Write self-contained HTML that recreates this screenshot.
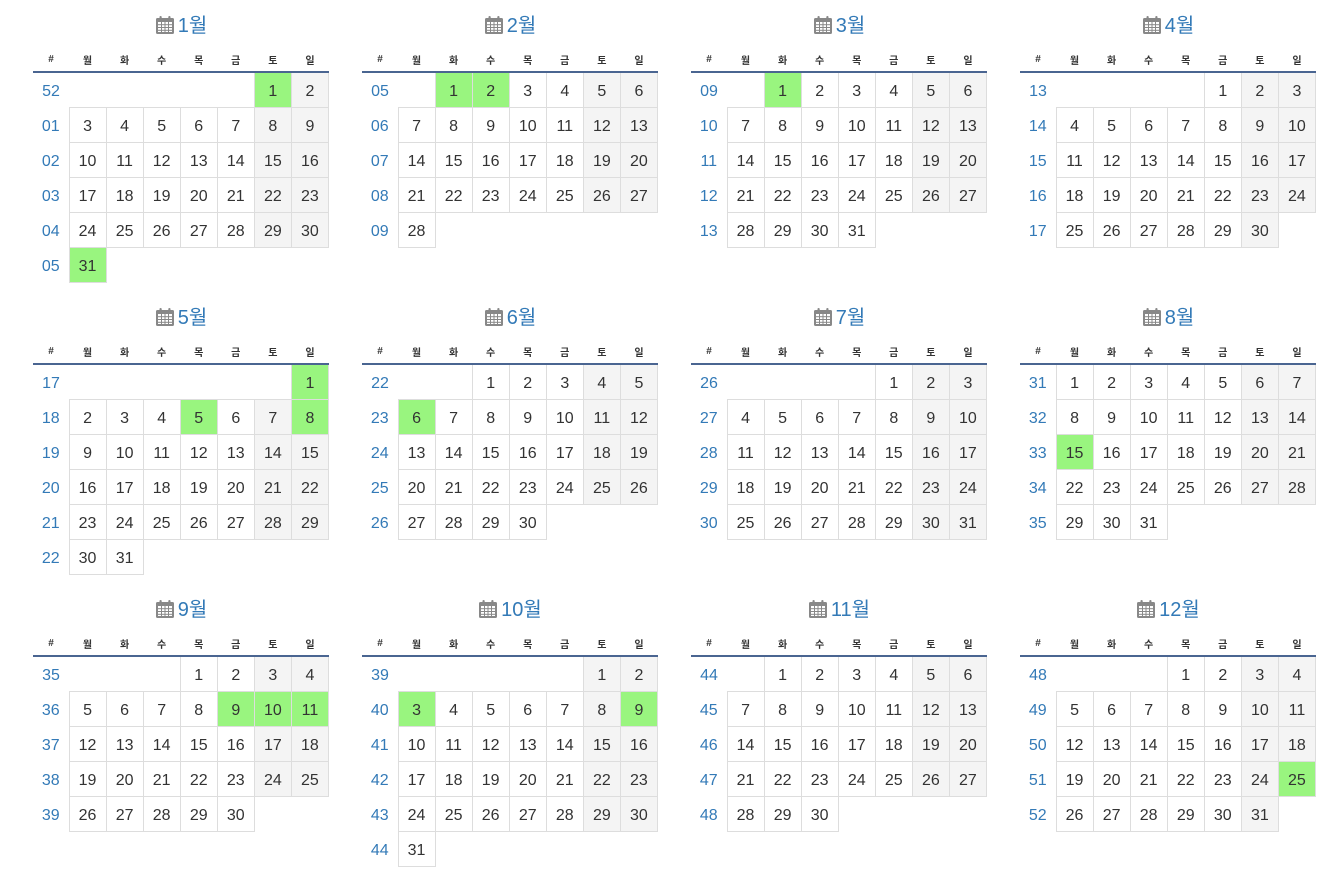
<!DOCTYPE html>
<html><head><meta charset="utf-8"><style>
body{margin:0;background:#fff;font-family:"Liberation Sans","Noto Sans CJK KR",sans-serif;color:#333;width:1341px;height:878px;overflow:hidden;position:relative}
.m{position:absolute;width:296px}
.t{height:47px;line-height:52px;text-align:center;font-size:20px;color:#337ab7}
.t svg{vertical-align:-3px;margin-right:3px}
table{border-collapse:collapse;width:296px;table-layout:fixed}
th{height:24px;font-size:10px;font-weight:bold;color:#333;border-bottom:2px solid #4a6591;padding:0;text-align:center}
th:first-child{width:36px}
td{height:30px;border:1px solid #ddd;text-align:center;font-size:16px;padding:4px 0 0 0}
td:first-child{border:none;color:#337ab7}
td.e{border:none}
td.w{background:#f4f4f4}
td.g{background:#99f57f}
</style></head><body>
<svg width="0" height="0" style="position:absolute"><defs><symbol id="cal" viewBox="0 0 20 20"><rect x="1" y="3" width="18" height="16" rx="1.5" fill="#888"/><rect x="3" y="7" width="14" height="10" fill="#fff"/><g fill="#888"><rect x="3" y="9.2" width="14" height="1"/><rect x="3" y="12" width="14" height="1"/><rect x="3" y="14.8" width="14" height="1"/><rect x="6" y="7" width="1" height="10"/><rect x="9.5" y="7" width="1" height="10"/><rect x="13" y="7" width="1" height="10"/></g><rect x="4.5" y="1" width="2.2" height="4" rx="1" fill="#888"/><rect x="13.3" y="1" width="2.2" height="4" rx="1" fill="#888"/></symbol></defs></svg>

<div class="m" style="left:33px;top:0"><div class="t"><svg width="20" height="20"><use href="#cal"/></svg>1월</div><table><tr><th>#</th><th>월</th><th>화</th><th>수</th><th>목</th><th>금</th><th>토</th><th>일</th></tr>
<tr><td>52</td><td class=e></td><td class=e></td><td class=e></td><td class=e></td><td class=e></td><td class=g>1</td><td class=w>2</td></tr>
<tr><td>01</td><td>3</td><td>4</td><td>5</td><td>6</td><td>7</td><td class=w>8</td><td class=w>9</td></tr>
<tr><td>02</td><td>10</td><td>11</td><td>12</td><td>13</td><td>14</td><td class=w>15</td><td class=w>16</td></tr>
<tr><td>03</td><td>17</td><td>18</td><td>19</td><td>20</td><td>21</td><td class=w>22</td><td class=w>23</td></tr>
<tr><td>04</td><td>24</td><td>25</td><td>26</td><td>27</td><td>28</td><td class=w>29</td><td class=w>30</td></tr>
<tr><td>05</td><td class=g>31</td></tr></table></div>

<div class="m" style="left:362px;top:0"><div class="t"><svg width="20" height="20"><use href="#cal"/></svg>2월</div><table><tr><th>#</th><th>월</th><th>화</th><th>수</th><th>목</th><th>금</th><th>토</th><th>일</th></tr>
<tr><td>05</td><td class=e></td><td class=g>1</td><td class=g>2</td><td>3</td><td>4</td><td class=w>5</td><td class=w>6</td></tr>
<tr><td>06</td><td>7</td><td>8</td><td>9</td><td>10</td><td>11</td><td class=w>12</td><td class=w>13</td></tr>
<tr><td>07</td><td>14</td><td>15</td><td>16</td><td>17</td><td>18</td><td class=w>19</td><td class=w>20</td></tr>
<tr><td>08</td><td>21</td><td>22</td><td>23</td><td>24</td><td>25</td><td class=w>26</td><td class=w>27</td></tr>
<tr><td>09</td><td>28</td></tr></table></div>

<div class="m" style="left:691px;top:0"><div class="t"><svg width="20" height="20"><use href="#cal"/></svg>3월</div><table><tr><th>#</th><th>월</th><th>화</th><th>수</th><th>목</th><th>금</th><th>토</th><th>일</th></tr>
<tr><td>09</td><td class=e></td><td class=g>1</td><td>2</td><td>3</td><td>4</td><td class=w>5</td><td class=w>6</td></tr>
<tr><td>10</td><td>7</td><td>8</td><td>9</td><td>10</td><td>11</td><td class=w>12</td><td class=w>13</td></tr>
<tr><td>11</td><td>14</td><td>15</td><td>16</td><td>17</td><td>18</td><td class=w>19</td><td class=w>20</td></tr>
<tr><td>12</td><td>21</td><td>22</td><td>23</td><td>24</td><td>25</td><td class=w>26</td><td class=w>27</td></tr>
<tr><td>13</td><td>28</td><td>29</td><td>30</td><td>31</td></tr></table></div>

<div class="m" style="left:1020px;top:0"><div class="t"><svg width="20" height="20"><use href="#cal"/></svg>4월</div><table><tr><th>#</th><th>월</th><th>화</th><th>수</th><th>목</th><th>금</th><th>토</th><th>일</th></tr>
<tr><td>13</td><td class=e></td><td class=e></td><td class=e></td><td class=e></td><td>1</td><td class=w>2</td><td class=w>3</td></tr>
<tr><td>14</td><td>4</td><td>5</td><td>6</td><td>7</td><td>8</td><td class=w>9</td><td class=w>10</td></tr>
<tr><td>15</td><td>11</td><td>12</td><td>13</td><td>14</td><td>15</td><td class=w>16</td><td class=w>17</td></tr>
<tr><td>16</td><td>18</td><td>19</td><td>20</td><td>21</td><td>22</td><td class=w>23</td><td class=w>24</td></tr>
<tr><td>17</td><td>25</td><td>26</td><td>27</td><td>28</td><td>29</td><td class=w>30</td></tr></table></div>

<div class="m" style="left:33px;top:292px"><div class="t"><svg width="20" height="20"><use href="#cal"/></svg>5월</div><table><tr><th>#</th><th>월</th><th>화</th><th>수</th><th>목</th><th>금</th><th>토</th><th>일</th></tr>
<tr><td>17</td><td class=e></td><td class=e></td><td class=e></td><td class=e></td><td class=e></td><td class=e></td><td class=g>1</td></tr>
<tr><td>18</td><td>2</td><td>3</td><td>4</td><td class=g>5</td><td>6</td><td class=w>7</td><td class=g>8</td></tr>
<tr><td>19</td><td>9</td><td>10</td><td>11</td><td>12</td><td>13</td><td class=w>14</td><td class=w>15</td></tr>
<tr><td>20</td><td>16</td><td>17</td><td>18</td><td>19</td><td>20</td><td class=w>21</td><td class=w>22</td></tr>
<tr><td>21</td><td>23</td><td>24</td><td>25</td><td>26</td><td>27</td><td class=w>28</td><td class=w>29</td></tr>
<tr><td>22</td><td>30</td><td>31</td></tr></table></div>

<div class="m" style="left:362px;top:292px"><div class="t"><svg width="20" height="20"><use href="#cal"/></svg>6월</div><table><tr><th>#</th><th>월</th><th>화</th><th>수</th><th>목</th><th>금</th><th>토</th><th>일</th></tr>
<tr><td>22</td><td class=e></td><td class=e></td><td>1</td><td>2</td><td>3</td><td class=w>4</td><td class=w>5</td></tr>
<tr><td>23</td><td class=g>6</td><td>7</td><td>8</td><td>9</td><td>10</td><td class=w>11</td><td class=w>12</td></tr>
<tr><td>24</td><td>13</td><td>14</td><td>15</td><td>16</td><td>17</td><td class=w>18</td><td class=w>19</td></tr>
<tr><td>25</td><td>20</td><td>21</td><td>22</td><td>23</td><td>24</td><td class=w>25</td><td class=w>26</td></tr>
<tr><td>26</td><td>27</td><td>28</td><td>29</td><td>30</td></tr></table></div>

<div class="m" style="left:691px;top:292px"><div class="t"><svg width="20" height="20"><use href="#cal"/></svg>7월</div><table><tr><th>#</th><th>월</th><th>화</th><th>수</th><th>목</th><th>금</th><th>토</th><th>일</th></tr>
<tr><td>26</td><td class=e></td><td class=e></td><td class=e></td><td class=e></td><td>1</td><td class=w>2</td><td class=w>3</td></tr>
<tr><td>27</td><td>4</td><td>5</td><td>6</td><td>7</td><td>8</td><td class=w>9</td><td class=w>10</td></tr>
<tr><td>28</td><td>11</td><td>12</td><td>13</td><td>14</td><td>15</td><td class=w>16</td><td class=w>17</td></tr>
<tr><td>29</td><td>18</td><td>19</td><td>20</td><td>21</td><td>22</td><td class=w>23</td><td class=w>24</td></tr>
<tr><td>30</td><td>25</td><td>26</td><td>27</td><td>28</td><td>29</td><td class=w>30</td><td class=w>31</td></tr></table></div>

<div class="m" style="left:1020px;top:292px"><div class="t"><svg width="20" height="20"><use href="#cal"/></svg>8월</div><table><tr><th>#</th><th>월</th><th>화</th><th>수</th><th>목</th><th>금</th><th>토</th><th>일</th></tr>
<tr><td>31</td><td>1</td><td>2</td><td>3</td><td>4</td><td>5</td><td class=w>6</td><td class=w>7</td></tr>
<tr><td>32</td><td>8</td><td>9</td><td>10</td><td>11</td><td>12</td><td class=w>13</td><td class=w>14</td></tr>
<tr><td>33</td><td class=g>15</td><td>16</td><td>17</td><td>18</td><td>19</td><td class=w>20</td><td class=w>21</td></tr>
<tr><td>34</td><td>22</td><td>23</td><td>24</td><td>25</td><td>26</td><td class=w>27</td><td class=w>28</td></tr>
<tr><td>35</td><td>29</td><td>30</td><td>31</td></tr></table></div>

<div class="m" style="left:33px;top:584px"><div class="t"><svg width="20" height="20"><use href="#cal"/></svg>9월</div><table><tr><th>#</th><th>월</th><th>화</th><th>수</th><th>목</th><th>금</th><th>토</th><th>일</th></tr>
<tr><td>35</td><td class=e></td><td class=e></td><td class=e></td><td>1</td><td>2</td><td class=w>3</td><td class=w>4</td></tr>
<tr><td>36</td><td>5</td><td>6</td><td>7</td><td>8</td><td class=g>9</td><td class=g>10</td><td class=g>11</td></tr>
<tr><td>37</td><td>12</td><td>13</td><td>14</td><td>15</td><td>16</td><td class=w>17</td><td class=w>18</td></tr>
<tr><td>38</td><td>19</td><td>20</td><td>21</td><td>22</td><td>23</td><td class=w>24</td><td class=w>25</td></tr>
<tr><td>39</td><td>26</td><td>27</td><td>28</td><td>29</td><td>30</td></tr></table></div>

<div class="m" style="left:362px;top:584px"><div class="t"><svg width="20" height="20"><use href="#cal"/></svg>10월</div><table><tr><th>#</th><th>월</th><th>화</th><th>수</th><th>목</th><th>금</th><th>토</th><th>일</th></tr>
<tr><td>39</td><td class=e></td><td class=e></td><td class=e></td><td class=e></td><td class=e></td><td class=w>1</td><td class=w>2</td></tr>
<tr><td>40</td><td class=g>3</td><td>4</td><td>5</td><td>6</td><td>7</td><td class=w>8</td><td class=g>9</td></tr>
<tr><td>41</td><td>10</td><td>11</td><td>12</td><td>13</td><td>14</td><td class=w>15</td><td class=w>16</td></tr>
<tr><td>42</td><td>17</td><td>18</td><td>19</td><td>20</td><td>21</td><td class=w>22</td><td class=w>23</td></tr>
<tr><td>43</td><td>24</td><td>25</td><td>26</td><td>27</td><td>28</td><td class=w>29</td><td class=w>30</td></tr>
<tr><td>44</td><td>31</td></tr></table></div>

<div class="m" style="left:691px;top:584px"><div class="t"><svg width="20" height="20"><use href="#cal"/></svg>11월</div><table><tr><th>#</th><th>월</th><th>화</th><th>수</th><th>목</th><th>금</th><th>토</th><th>일</th></tr>
<tr><td>44</td><td class=e></td><td>1</td><td>2</td><td>3</td><td>4</td><td class=w>5</td><td class=w>6</td></tr>
<tr><td>45</td><td>7</td><td>8</td><td>9</td><td>10</td><td>11</td><td class=w>12</td><td class=w>13</td></tr>
<tr><td>46</td><td>14</td><td>15</td><td>16</td><td>17</td><td>18</td><td class=w>19</td><td class=w>20</td></tr>
<tr><td>47</td><td>21</td><td>22</td><td>23</td><td>24</td><td>25</td><td class=w>26</td><td class=w>27</td></tr>
<tr><td>48</td><td>28</td><td>29</td><td>30</td></tr></table></div>

<div class="m" style="left:1020px;top:584px"><div class="t"><svg width="20" height="20"><use href="#cal"/></svg>12월</div><table><tr><th>#</th><th>월</th><th>화</th><th>수</th><th>목</th><th>금</th><th>토</th><th>일</th></tr>
<tr><td>48</td><td class=e></td><td class=e></td><td class=e></td><td>1</td><td>2</td><td class=w>3</td><td class=w>4</td></tr>
<tr><td>49</td><td>5</td><td>6</td><td>7</td><td>8</td><td>9</td><td class=w>10</td><td class=w>11</td></tr>
<tr><td>50</td><td>12</td><td>13</td><td>14</td><td>15</td><td>16</td><td class=w>17</td><td class=w>18</td></tr>
<tr><td>51</td><td>19</td><td>20</td><td>21</td><td>22</td><td>23</td><td class=w>24</td><td class=g>25</td></tr>
<tr><td>52</td><td>26</td><td>27</td><td>28</td><td>29</td><td>30</td><td class=w>31</td></tr></table></div>
</body></html>
